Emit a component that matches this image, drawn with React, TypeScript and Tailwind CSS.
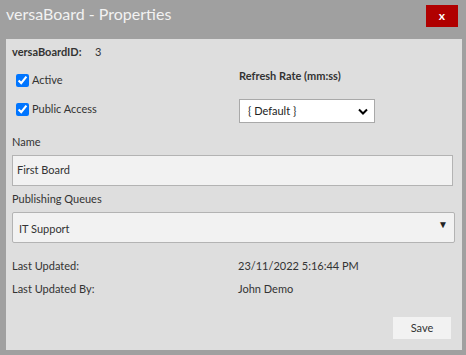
import * as React from 'react'

export default function App() {
  return (
    <div className="w-[466px] h-[355px] bg-[#a0a0a0] pl-[6px] pr-[6px] pb-[5px] flex flex-col" style={{ fontFamily: 'Lato, "Open Sans", sans-serif' }}>
      <div className="h-[39px] flex items-start justify-between">
        <div className="text-[16px] leading-[18px] mt-[5px] text-[#f2f2f2]">versaBoard - Properties</div>
        <button className="mt-[5px] mr-[2px] w-[32px] h-[22px] bg-[#b00000] text-white text-[12px] font-bold flex items-center justify-center">x</button>
      </div>
      <div className="flex-1 bg-[#dedede] mr-[-2px] px-[6px] pt-[5px] text-[11px] text-[#333] flex flex-col">
        <div className="flex items-center h-[16px]">
          <span className="font-bold w-[83px]">versaBoardID:</span>
          <span>3</span>
        </div>
        <div className="flex mt-[6px]">
          <div className="w-[227px] flex flex-col pl-[4px]">
            <label className="flex items-center gap-[3px] h-[24px] mt-[2px]">
              <input type="checkbox" defaultChecked className="w-[13px] h-[13px] m-0 accent-[#0075ff]" />
              <span>Active</span>
            </label>
            <label className="flex items-center gap-[3px] h-[24px] mt-[5px]">
              <input type="checkbox" defaultChecked className="w-[13px] h-[13px] m-0 accent-[#0075ff]" />
              <span>Public Access</span>
            </label>
          </div>
          <div className="flex flex-col">
            <div className="font-bold h-[16px] mt-[2px] leading-[16px]">Refresh Rate (mm:ss)</div>
            <div className="mt-[15px] w-[136px] h-[24px] bg-white border border-[#a9a9a9] flex items-center justify-between pl-[8px] pr-[6px]">
              <span className="text-[#222]">{'{ Default }'}</span>
              <svg width="10" height="7" viewBox="0 0 10 7"><path d="M1 1.5 L5 5.5 L9 1.5" fill="none" stroke="#000" strokeWidth="2" /></svg>
            </div>
          </div>
        </div>
        <div className="mt-[11px] h-[16px] leading-[16px]">Name</div>
        <div className="mt-[5px] mr-[3px] h-[31px] bg-[#f2f2f2] border border-[#b3b3b3] flex items-center px-[4px]">First Board</div>
        <div className="mt-[5px] h-[16px] leading-[16px]">Publishing Queues</div>
        <div className="mt-[5px] mr-[1px] h-[31px] bg-[#f2f2f2] border border-[#b3b3b3] rounded-[2px] flex items-start justify-between pl-[6px] pr-[6px]">
          <span className="mt-[8px]">IT Support</span>
          <span className="mt-[4px] text-[10px] text-[#222]">▼</span>
        </div>
        <div className="flex mt-[15px] h-[16px] items-center">
          <span className="w-[226px]">Last Updated:</span>
          <span>23/11/2022 5:16:44 PM</span>
        </div>
        <div className="flex mt-[7px] h-[16px] items-center">
          <span className="w-[226px]">Last Updated By:</span>
          <span>John Demo</span>
        </div>
        <div className="flex justify-end mt-[20px] mr-[5px]">
          <button className="w-[58px] h-[22px] bg-[#f2f2f2] text-[#333] text-[11px]">Save</button>
        </div>
      </div>
    </div>
  )
}
